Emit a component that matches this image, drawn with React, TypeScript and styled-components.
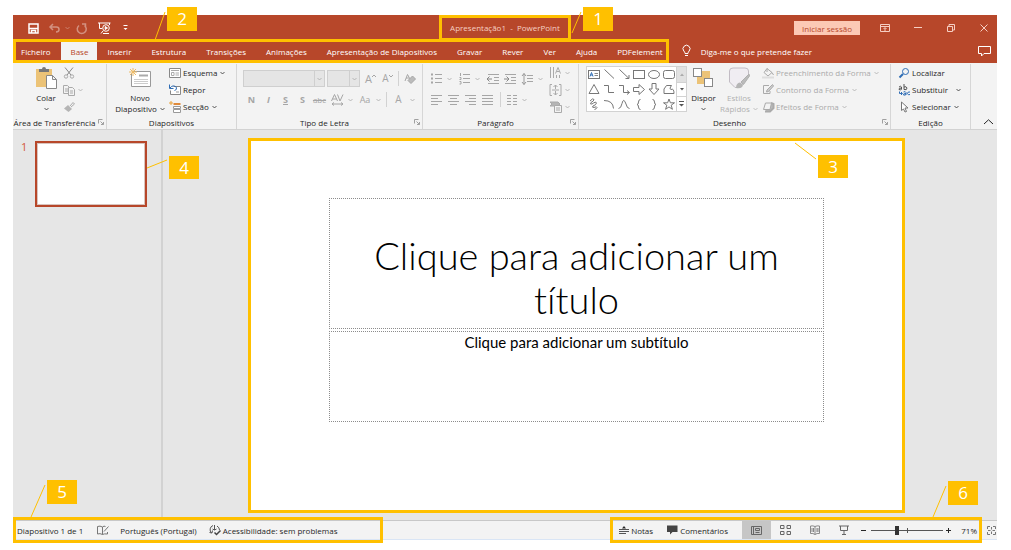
import React from "react";
import styled, { createGlobalStyle, css } from "styled-components";

const GOLD = "#ffc000";
const BRAND = "#b7472a";
const UI_FONT = `"Open Sans", "Noto Sans", sans-serif`;
const SLIDE_FONT = `Lato, "Open Sans", sans-serif`;

const GlobalStyle = createGlobalStyle`
  * { box-sizing: border-box; }
  body { margin: 0; background: #fff; }
  button, select, input { font: inherit; color: inherit; }
`;

/* ---------- shared pieces ---------- */

const Page = styled.div`
  padding: 15px 14px 6px 13px;
  font: 8px/11px ${UI_FONT};
  color: #262626;
`;

const Plain = styled.button`
  display: flex;
  align-items: center;
  justify-content: center;
  padding: 0;
  border: 0;
  background: none;
  cursor: pointer;
  white-space: nowrap;
`;

const Svg = styled.svg`
  display: block;
  flex: none;
  fill: none;
  stroke: currentColor;
  stroke-width: 1;
  overflow: visible;
`;

type IconProps = { w?: number; h?: number; children: React.ReactNode };
const Icon = ({ w = 12, h = 12, children }: IconProps) => (
  <Svg width={w} height={h} viewBox={`0 0 ${w} ${h}`} aria-hidden="true">
    {children}
  </Svg>
);

const Caret = () => (
  <Icon w={5} h={4}>
    <path d="M.5 1 2.5 3 4.5 1" opacity=".75" />
  </Icon>
);

/* ---------- annotations ---------- */

type Place = { $left?: number; $right?: number; $top: number };

const CalloutBox = styled.span<Place & { $h: number }>`
  position: absolute;
  top: ${(p) => p.$top}px;
  ${(p) => (p.$right !== undefined ? `right: ${p.$right}px;` : `left: ${p.$left}px;`)}
  z-index: 3;
  width: 30px;
  height: ${(p) => p.$h}px;
  background: ${GOLD};
  color: #fff;
  font: 17px/${(p) => p.$h}px ${UI_FONT};
  text-align: center;
`;

const Leader = styled(Svg)`
  position: absolute;
  left: 0;
  top: 0;
  stroke: ${GOLD};
`;

type CalloutProps = { n: number; left?: number; right?: number; top: number; h?: number; to: [number, number]; from?: [number, number] };
const Callout = ({ n, left, right, top, h = 24, to, from = [-2, 5] }: CalloutProps) => (
  <CalloutBox $left={left} $right={right} $top={top} $h={h}>
    {n}
    <Leader width={1} height={1} aria-hidden="true">
      <line x1={from[0]} y1={from[1]} x2={to[0]} y2={to[1]} />
    </Leader>
  </CalloutBox>
);

const Framed = styled.div`
  position: relative;
  border: 3px solid ${GOLD};
`;

/* ---------- title bar ---------- */

const TitleBar = styled.header`
  display: grid;
  grid-template-columns: 1fr auto 1fr;
  height: 24px;
  background: ${BRAND};
  color: #fff;
`;

const QuickAccess = styled.div`
  display: flex;
  align-items: center;
  padding-left: 11px;
`;

const QuickButton = styled(Plain)<{ $w: number; $dim?: boolean }>`
  width: ${(p) => p.$w}px;
  height: 20px;
  opacity: ${(p) => (p.$dim ? 0.4 : 1)};
`;

const WindowTitle = styled(Framed)`
  padding: 0 8px;
  line-height: 20px;
  color: #f6cfc3;
  white-space: pre;
`;

const WindowTools = styled.div`
  display: flex;
  align-items: center;
  justify-content: flex-end;
`;

const SignIn = styled(Plain)`
  width: 66px;
  height: 14px;
  margin-right: 8px;
  background: #fcc9b5;
  color: ${BRAND};
`;

const WindowButton = styled(Plain)`
  width: 33px;
  height: 22px;
  color: #f6cfc3;
  &:last-child {
    width: 30px;
    padding-left: 4px;
  }
`;

/* ---------- tabs ---------- */

const TabBar = styled.div`
  display: flex;
  align-items: stretch;
  height: 24px;
  background: ${BRAND};
  color: #fff;
`;

const TabList = styled(Framed).attrs({ as: "nav" })`
  display: flex;
`;

const Tab = styled(Plain)<{ $active?: boolean }>`
  padding: 0 10px;
  &:first-of-type { padding: 0 11px 0 5px; }
  &:last-of-type { padding-right: 3px; }
  ${(p) => p.$active && css`
    padding: 0 9px;
    background: #f3f3f3;
    color: ${BRAND};
  `}
`;

const TellMe = styled(Plain)`
  gap: 10px;
  margin-left: 13px;
`;

const CommentsToggle = styled(Plain)`
  margin: 0 6px 0 auto;
`;

/* ---------- ribbon ---------- */

const Ribbon = styled.section`
  display: grid;
  grid-template-columns: 94fr 130fr 186fr 156fr 312fr 80fr 26fr;
  height: 67px;
  padding: 1px 0;
  background: #f3f3f3;
  border-bottom: 1px solid #d2d2d2;
`;

const Group = styled.div`
  display: flex;
  flex-direction: column;
  min-width: 0;
  border-right: 1px solid #d6d6d6;
`;

const GroupBody = styled.div<{ $pad: number }>`
  display: flex;
  align-items: flex-start;
  height: 51px;
  padding-left: ${(p) => p.$pad}px;
`;

const GroupLabel = styled.div`
  display: flex;
  align-items: center;
  height: 14px;
  white-space: nowrap;
  span { flex: 1; text-align: center; }
`;

const Launcher = styled(Plain)`
  width: 10px;
  color: #a0a0a0;
`;

const LauncherIcon = () => (
  <Launcher aria-label="Mais opções">
    <Icon w={6} h={6}>
      <path d="M.5 4.500V.5H4.500M2.500 2.500 5.500 5.500M5.500 3V5.500H3" />
    </Icon>
  </Launcher>
);

const BigButton = styled(Plain)<{ $w: number; $muted?: boolean }>`
  flex-direction: column;
  justify-content: flex-start;
  width: ${(p) => p.$w}px;
  color: ${(p) => (p.$muted ? "#b0b0b0" : "#262626")};
`;

const BigArt = styled.span`
  display: grid;
  place-items: center;
  height: 28px;
`;

const LabelLine = styled.span`
  display: flex;
  align-items: center;
  gap: 3px;
  height: 11px;
`;

const Stack = styled.div<{ $ml?: number }>`
  display: grid;
  grid-auto-rows: 17px;
  justify-items: start;
  margin-left: ${(p) => p.$ml ?? 0}px;
`;

const StackButton = styled(Plain)<{ $muted?: boolean; $far?: boolean }>`
  gap: 2px;
  color: ${(p) => (p.$muted ? "#aaa" : "#262626")};
  > svg:nth-of-type(2) { margin-left: ${(p) => (p.$far ? 6 : 1)}px; }
`;

const Rows = styled.div`
  display: grid;
  grid-auto-rows: 17px;
  gap: 4px;
  padding-top: 6px;
  color: #a6a6a6;
`;

const Row = styled.div`
  display: flex;
  align-items: center;
`;

const Tool = styled(Plain)<{ $w?: number; $size?: number; $bold?: boolean }>`
  width: ${(p) => p.$w ?? 17}px;
  height: 17px;
  font-size: ${(p) => p.$size ?? 9}px;
  font-weight: ${(p) => (p.$bold ? 700 : 400)};
`;

const Rule = styled.i`
  width: 1px;
  height: 15px;
  margin: 0 2px;
  background: #d2d2d2;
`;

const Gap = styled.i`
  width: 2px;
`;

const Combo = styled.label<{ $w: number }>`
  display: flex;
  align-items: center;
  width: ${(p) => p.$w}px;
  height: 17px;
  margin-right: 2px;
  padding-right: 2px;
  border: 1px solid #cfcfcf;
  background: #e5e5e5;
  select {
    flex: 1;
    min-width: 0;
    height: 15px;
    margin-right: 2px;
    padding: 0;
    border: 0;
    border-right: 1px solid #cfcfcf;
    background: none;
    appearance: none;
  }
`;

const Gallery = styled.div`
  display: grid;
  grid-template-columns: 89px 10px;
  margin-top: 2px;
  height: 46px;
  border: 1px solid #d2d2d2;
  background: #fff;
  width: 101px;
`;

const Shapes = styled.div`
  display: grid;
  grid-template-columns: repeat(6, 1fr);
  grid-template-rows: repeat(3, 1fr);
  color: #777;
`;

const Scroller = styled.div`
  display: grid;
  grid-template-rows: repeat(3, 1fr);
  border-left: 1px solid #d2d2d2;
  color: #555;
  button + button { border-top: 1px solid #d2d2d2; }
  button:first-child { background: #e1e1e1; color: #aaa; }
`;

const Collapse = styled(Plain)`
  align-self: end;
  justify-content: flex-end;
  height: 14px;
  padding-right: 4px;
`;

/* ---------- workspace ---------- */

const Workspace = styled.main`
  display: flex;
  background: #e6e6e6;
`;

const Thumbs = styled.aside`
  display: flex;
  align-items: flex-start;
  flex: none;
  width: 150px;
  padding: 11px 0 0 8px;
  border-right: 2px solid #d2d2d2;
`;

const ThumbNumber = styled.span`
  width: 14px;
  font-size: 11px;
  color: #d2573a;
`;

const Thumb = styled(Plain)`
  position: relative;
  width: 112px;
  height: 66px;
  border: 2px solid ${BRAND};
  background: #fff;
  box-shadow: inset 0 0 0 1px #d9c4be;
  cursor: default;
`;

const Stage = styled.div`
  flex: 1;
  padding: 8px 92px 4px 85px;
`;

const Slide = styled(Framed)`
  height: 375px;
  padding: 57px 78px 0 78px;
  background: #fff;
`;

const Placeholder = styled.div`
  border: 1px dotted #8c8c8c;
  font-family: ${SLIDE_FONT};
  font-variant-ligatures: none;
  text-align: center;
  color: #000;
`;

const TitleHolder = styled(Placeholder)`
  height: 131px;
  padding: 34px 30px 0;
  h1 {
    margin: 0;
    font-size: 38px;
    line-height: 44px;
    font-weight: 300;
  }
`;

const SubtitleHolder = styled(Placeholder)`
  height: 91px;
  margin-top: 2px;
  font-size: 15px;
  line-height: 20px;
`;

/* ---------- status bar ---------- */

const StatusBar = styled.footer`
  display: flex;
  align-items: flex-start;
  justify-content: space-between;
  background: linear-gradient(#e6e6e6 0 3px, #c8c8c8 3px 4px, #f3f3f3 4px 22px, #d9e5f5 22px 23px, #fff 23px);
`;

const StatusLeft = styled(Framed)`
  display: flex;
  align-items: center;
  width: 370px;
  height: 26px;
  padding-left: 1px;
  white-space: nowrap;
`;

const StatusItem = styled(Plain)<{ $ml?: number }>`
  gap: 2px;
  margin-left: ${(p) => p.$ml ?? 0}px;
`;

const StatusRight = styled.div`
  display: flex;
`;

const StatusTools = styled(Framed)`
  display: flex;
  align-items: center;
  height: 26px;
  padding-left: 6px;
`;

const Views = styled.div`
  display: flex;
  margin-left: 14px;
`;

const View = styled(Plain)<{ $active?: boolean }>`
  width: 29px;
  height: 18px;
  color: #666;
  background: ${(p) => (p.$active ? "#c6c6c6" : "none")};
`;

const Zoom = styled.input`
  width: 72px;
  height: 10px;
  margin: 0 3px;
  appearance: none;
  background:
    linear-gradient(#555, #555) 36px center / 1px 5px no-repeat,
    linear-gradient(#555, #555) center / 100% 1px no-repeat;
  &::-webkit-slider-thumb {
    appearance: none;
    width: 4px;
    height: 9px;
    background: #333;
  }
`;

const Percent = styled.output`
  width: 28px;
  padding-right: 2px;
  text-align: right;
`;

const Fit = styled(Plain)`
  width: 15px;
  height: 26px;
  justify-content: flex-end;
  padding-right: 1px;
  color: #777;
`;

/* ---------- data ---------- */

const tabs = ["Ficheiro", "Base", "Inserir", "Estrutura", "Transições", "Animações", "Apresentação de Diapositivos", "Gravar", "Rever", "Ver", "Ajuda", "PDFelement"];

const shapes: [string, React.ReactNode][] = [
  ["Caixa de texto", <><rect x=".5" y="2.500" width="11" height="8" /><path d="M2 8.500 3.500 4.500 5 8.500M2.500 7H4.500" stroke="#2f6db5" /><path d="M6.500 5.500H10M6.500 7.500H10" stroke="#888" /></>],
  ["Linha", <path d="M1.500 1.500 11 10.500" />],
  ["Seta", <path d="M1.500 1.500 11 10.500M11 7V10.500H7.500" />],
  ["Retângulo", <rect x=".5" y="2.500" width="11" height="8" />],
  ["Oval", <ellipse cx="6" cy="6.500" rx="5.500" ry="4" />],
  ["Retângulo arredondado", <rect x=".5" y="2.500" width="11" height="8" rx="2" />],
  ["Triângulo", <path d="M6 1.500 11 10.500H1Z" />],
  ["Conector", <path d="M1 2.500H5.500V9.500H11" />],
  ["Conector com seta", <path d="M1 2.500H5.500V9.500H11.500M9 7.500 11.500 9.500 9 11.500" />],
  ["Seta para a direita", <path d="M.5 4.500H6V1.500L11.500 6.500 6 11.500V8.500H.5Z" />],
  ["Seta para baixo", <path d="M4 .5H8V6H11L6 11.500 1 6H4Z" />],
  ["Forma livre", <path d="M3.500 2.500H8.500Q6 6 8 6.500 11 5 11 10.500H1V6Z" />],
  ["Rabisco", <path d="M2 3Q5-.5 6 1.500 6 3 3 4.500 1.500 6.500 4 6 8 3 8.500 5 8 7 5 8 3.500 9.500 6 9.500 9 8 9 9.500 8.500 11 6.500 11.500" />],
  ["Arco", <path d="M1 2.500Q10 2.500 10.500 10.500" />],
  ["Curva", <path d="M.5 10.500Q3 10.500 4 5.500Q5.500-1 8 6Q9 10.500 11.500 10.500" />],
  ["Chaveta esquerda", <path d="M7.500 1.500Q5.500 1.500 5.500 4 5.500 6.500 4 6.500 5.500 6.500 5.500 9 5.500 11.500 7.500 11.500" />],
  ["Chaveta direita", <path d="M4.500 1.500Q6.500 1.500 6.500 4 6.500 6.500 8 6.500 6.500 6.500 6.500 9 6.500 11.500 4.500 11.500" />],
  ["Estrela", <path d="M6 1 7.400 4.800H11.500L8.200 7.200 9.400 11.300 6 8.900 2.600 11.300 3.800 7.200.5 4.800H4.600Z" />],
];

const lines = (rows: [number, number][]) => rows.map(([a, b], i) => `M${a} ${i * 3 + 1.5}H${b}`).join("");

/* ---------- sections ---------- */

const Title = () => (
  <TitleBar>
    <QuickAccess>
      <QuickButton $w={18} aria-label="Guardar">
        <Icon w={11} h={11}>
          <path d="M1 1H10V10H1Z" strokeWidth="1.500" />
          <path d="M1 5.500H10M3.500 10V7.500H7.500V10" strokeWidth="1.500" />
        </Icon>
      </QuickButton>
      <QuickButton $w={24} $dim aria-label="Anular">
        <Icon w={11} h={10}>
          <path d="M4 1 1 4 4 7M1 4H7.500Q10 4 10 6.500 10 9 7 9" strokeWidth="1.500" />
        </Icon>
      </QuickButton>
      <QuickButton $w={3} $dim aria-label="Opções de anular"><Caret /></QuickButton>
      <QuickButton $w={25} $dim aria-label="Refazer">
        <Icon w={11} h={11}>
          <path d="M3 2.500A4.500 4.500 0 1 0 8.500 2.500M6 1H9.500V4.500" strokeWidth="1.500" />
        </Icon>
      </QuickButton>
      <QuickButton $w={21} aria-label="Apresentar do início">
        <Icon w={13} h={12}>
          <path d="M0 1H12.500M1.500 1V6.500H4M11.500 1V3M3 11.500 5 9" />
          <circle cx="8" cy="6" r="3.300" />
          <path d="M7.200 4.500 9.500 6 7.200 7.500Z" fill="currentColor" />
          <path d="M5 11.500H11" />
        </Icon>
      </QuickButton>
      <QuickButton $w={20} aria-label="Personalizar">
        <Icon w={5} h={6}>
          <path d="M.5.5H4.500" />
          <path d="M.5 3H4.500L2.500 5Z" fill="currentColor" stroke="none" />
        </Icon>
      </QuickButton>
    </QuickAccess>
    <WindowTitle>
      {"Apresentação1  -  PowerPoint"}
      <Callout n={1} left={141} top={-11} to={[-11, 26]} />
    </WindowTitle>
    <WindowTools>
      <SignIn>Iniciar sessão</SignIn>
      <WindowButton aria-label="Opções do friso">
        <Icon w={10} h={8}>
          <path d="M.5.5H9.500V7.500H.5ZM.5 2.500H9.500M5 7V4M3.500 5 5 3.500 6.500 5" />
        </Icon>
      </WindowButton>
      <WindowButton aria-label="Minimizar">
        <Icon w={8} h={8}><path d="M0 3.500H8" /></Icon>
      </WindowButton>
      <WindowButton aria-label="Restaurar">
        <Icon w={8} h={8}><path d="M.5 2.500H5.500V7.500H.5ZM2 2V.5H7.500V6H6" /></Icon>
      </WindowButton>
      <WindowButton aria-label="Fechar">
        <Icon w={8} h={8}><path d="M.5.5 7.500 7.500M7.500.5.5 7.500" /></Icon>
      </WindowButton>
    </WindowTools>
  </TitleBar>
);

const Tabs = () => (
  <TabBar>
    <TabList>
      {tabs.map((t) => (
        <Tab key={t} $active={t === "Base"}>{t}</Tab>
      ))}
      <Callout n={2} left={151} top={-35} to={[-12, 33]} />
    </TabList>
    <TellMe>
      <Icon w={9} h={12}>
        <path d="M3 8.500Q3 7 1.800 6A3.500 3.500 0 1 1 7.200 6Q6 7 6 8.500ZM3 10.500H6" />
      </Icon>
      Diga-me o que pretende fazer
    </TellMe>
    <CommentsToggle aria-label="Comentários">
      <Icon w={13} h={11}>
        <path d="M.5.5H12.500V7.500H6L3.500 10V7.500H.5Z" />
      </Icon>
    </CommentsToggle>
  </TabBar>
);

const Clipboard = () => (
  <Group>
    <GroupBody $pad={16}>
      <BigButton $w={34}>
        <BigArt>
          <Icon w={22} h={24}>
            <rect x="1" y="3" width="16" height="18" fill="#ecc377" stroke="none" />
            <path d="M4 3H7Q7 1 9 1 11 1 11 3H14V6H4Z" fill="#777" stroke="none" />
            <path d="M11.500 9.500H17.500L21.500 13.500V22.500H11.500ZM17.500 9.500V13.500H21.500" fill="#fff" stroke="#888" />
          </Icon>
        </BigArt>
        <LabelLine>Colar</LabelLine>
        <LabelLine><Caret /></LabelLine>
      </BigButton>
      <Stack>
        <StackButton $muted aria-label="Cortar">
          <Icon>
            <path d="M2 .5 8 8M10 .5 4 8" stroke="#888" />
            <circle cx="3" cy="9.500" r="1.700" />
            <circle cx="9" cy="9.500" r="1.700" />
          </Icon>
        </StackButton>
        <StackButton $muted aria-label="Copiar">
          <Icon>
            <path d="M.5 1.500H4.500L6.500 3.500V9.500H.5ZM2 5H5M2 7H5" />
            <path d="M5.500 3.500H9.500L11.500 5.500V11.500H5.500ZM7 7H10M7 9H10" fill="#f3f3f3" />
          </Icon>
          <Caret />
        </StackButton>
        <StackButton $muted aria-label="Pincel de formatação">
          <Icon>
            <path d="M7 5 10 1.500 11.500 3 8 6" />
            <path d="M5 4 9 8 5.500 11 1 7.500Z" fill="#b5b5b5" stroke="none" />
          </Icon>
        </StackButton>
      </Stack>
    </GroupBody>
    <GroupLabel><span>Área de Transferência</span><LauncherIcon /></GroupLabel>
  </Group>
);

const Slides = () => (
  <Group>
    <GroupBody $pad={7}>
      <BigButton $w={52}>
        <BigArt>
          <Icon w={22} h={20}>
            <path d="M3.500 3.500H21.500V18.500H2.500V5" fill="#fff" stroke="#999" />
            <path d="M10 7.500H19" stroke="#aaa" strokeWidth="2" />
            <path d="M5 11.500H19M5 13.500H19M5 15.500H19" stroke="#ccc" />
            <path d="M4 0V8M0 4H8M1 1 7 7M7 1 1 7" stroke="#eebb66" />
          </Icon>
        </BigArt>
        <LabelLine>Novo</LabelLine>
        <LabelLine>Diapositivo <Caret /></LabelLine>
      </BigButton>
      <Stack $ml={3}>
        <StackButton>
          <Icon>
            <path d="M.5 1.500H11.500V10.500H.5Z" fill="#fff" stroke="#888" />
            <path d="M2 3.500H10M2.500 5.500H5V8.500H2.500ZM6.500 6H10M6.500 8H10" stroke="#aaa" />
          </Icon>
          Esquema <Caret />
        </StackButton>
        <StackButton>
          <Icon>
            <path d="M4.500 2.500H11.500V10.500H1.500V6.500" fill="#fff" stroke="#888" />
            <path d="M.5.5V4.500H4.500M1 4Q4 0 7.500 3.500 8 6 5.500 6.500" stroke="#2f6db5" />
            <path d="M7 8H10" stroke="#999" />
          </Icon>
          Repor
        </StackButton>
        <StackButton>
          <Icon>
            <path d="M4.500 3H11.500" stroke="#e08a3a" strokeWidth="2" />
            <path d="M4.500 5.500H11.500V7.500H4.500ZM4.500 8.500H11.500V11.500H4.500Z" fill="#fff" stroke="#999" />
            <path d="M2 0V4M0 2H4" stroke="#e8a33d" />
          </Icon>
          Secção <Caret />
        </StackButton>
      </Stack>
    </GroupBody>
    <GroupLabel><span>Diapositivos</span></GroupLabel>
  </Group>
);

const FontGroup = () => (
  <Group>
    <GroupBody $pad={6}>
      <Rows>
        <Row>
          <Combo $w={82}><select aria-label="Tipo de letra" /><Caret /></Combo>
          <Combo $w={33}><select aria-label="Tamanho" /><Caret /></Combo>
          <Tool $size={11} aria-label="Aumentar">A<Icon w={4} h={10}><path d="M0 3 2 1 4 3" /></Icon></Tool>
          <Tool $size={10} aria-label="Diminuir">A<Icon w={4} h={10}><path d="M0 1 2 3 4 1" /></Icon></Tool>
          <Rule />
          <Tool aria-label="Limpar formatação">
            <Icon>
              <path d="M1 8 3.500 1.500 6 6M2 5H5" />
              <path d="M8.500 3 11.500 6 7 10.500 4 7.500Z" fill="#bbb" />
            </Icon>
          </Tool>
        </Row>
        <Row>
          <Tool $bold>N</Tool>
          <Tool $bold><em>I</em></Tool>
          <Tool $bold><u>S</u></Tool>
          <Tool $bold>S</Tool>
          <Tool $size={8}><s>abc</s></Tool>
          <Tool $w={18} aria-label="Espaçamento">
            <Icon w={13} h={12}>
              <path d="M.5 7 3.500.5 6.500 7M1.500 5H5.500M6.500.5 9 7 12 .5M1 10H12M3 8.500 1 10 3 11.500M10 8.500 12 10 10 11.500" />
            </Icon>
          </Tool>
          <Tool $w={8} aria-label="Opções de espaçamento"><Caret /></Tool>
          <Gap />
          <Tool $w={18} $size={9}>Aa</Tool>
          <Tool $w={8} aria-label="Opções de maiúsculas"><Caret /></Tool>
          <Gap />
          <Rule />
          <Tool $w={19} $size={10}>A</Tool>
          <Tool $w={8} aria-label="Opções de cor"><Caret /></Tool>
        </Row>
      </Rows>
    </GroupBody>
    <GroupLabel><span>Tipo de Letra</span><LauncherIcon /></GroupLabel>
  </Group>
);

const Paragraph = () => (
  <Group>
    <GroupBody $pad={5}>
      <Rows>
        <Row>
          <Tool aria-label="Marcas">
            <Icon w={11} h={11}>
              <path d="M4 1.500H11M4 5.500H11M4 9.500H11" />
              <path d="M0 1.500H2M0 5.500H2M0 9.500H2" strokeWidth="2" />
            </Icon>
          </Tool>
          <Tool $w={9} aria-label="Opções de marcas"><Caret /></Tool>
          <Gap />
          <Tool aria-label="Numeração">
            <Icon w={11} h={11}>
              <path d="M4 1.500H11M4 5.500H11M4 9.500H11M1.500 0V3M.5 4.500H2V6.500H.5M.5 8.500H2V11H.5" />
            </Icon>
          </Tool>
          <Tool $w={9} aria-label="Opções de numeração"><Caret /></Tool>
          <Gap />
          <Tool aria-label="Diminuir avanço">
            <Icon w={12} h={10}>
              <path d="M1 .5H12M7 3.500H12M7 6.500H12M1 9.500H12" />
              <path d="M0 5H5M2.500 2.500 0 5 2.500 7.500" stroke="#888" />
            </Icon>
          </Tool>
          <Tool aria-label="Aumentar avanço">
            <Icon w={12} h={10}>
              <path d="M1 .5H12M7 3.500H12M7 6.500H12M1 9.500H12" />
              <path d="M0 5H5M2.500 2.500 5 5 2.500 7.500" stroke="#888" />
            </Icon>
          </Tool>
          <Tool $w={18} aria-label="Espaçamento entre linhas">
            <Icon w={11} h={12}>
              <path d="M5 2.500H11M5 5.500H11M5 8.500H11" />
              <path d="M2 .5V11.500M0 3 2 .5 4 3M0 9 2 11.500 4 9" stroke="#999" />
            </Icon>
          </Tool>
          <Tool $w={9} aria-label="Opções de espaçamento entre linhas"><Caret /></Tool>
        </Row>
        <Row>
          <Tool aria-label="Alinhar à esquerda"><Icon w={11} h={11}><path d={lines([[0, 11], [0, 7], [0, 11], [0, 7]])} /></Icon></Tool>
          <Tool aria-label="Centrar"><Icon w={11} h={11}><path d={lines([[0, 11], [2, 9], [0, 11], [2, 9]])} /></Icon></Tool>
          <Tool aria-label="Alinhar à direita"><Icon w={11} h={11}><path d={lines([[0, 11], [4, 11], [0, 11], [4, 11]])} /></Icon></Tool>
          <Tool aria-label="Justificar"><Icon w={11} h={11}><path d={lines([[0, 11], [0, 11], [0, 11], [0, 11]])} /></Icon></Tool>
          <Gap />
          <Rule />
          <Tool aria-label="Colunas"><Icon w={10} h={11}><path d="M0 1.500H4M0 4.500H4M0 7.500H4M0 10.500H4M6 1.500H10M6 4.500H10M6 7.500H10M6 10.500H10" /></Icon></Tool>
          <Tool $w={9} aria-label="Opções de colunas"><Caret /></Tool>
        </Row>
      </Rows>
      <Stack $ml={4}>
        <StackButton $muted aria-label="Orientação do texto">
          <Icon w={13} h={12}><path d="M1.500 0V11M4.500 0V11M7.500 8V11M10.500 8V11M6.500 6.500 9 .5 11.500 6.500M7.500 4.500H10.500" /></Icon>
          <Caret />
        </StackButton>
        <StackButton $muted aria-label="Alinhar texto">
          <Icon w={13} h={12}><path d="M3 .5H1V11.500H3M10 .5H12V11.500H10M6.500 1V5M6.500 7V11M4.500 3 6.500 1 8.500 3M4.500 9 6.500 11 8.500 9M3 6H10" /></Icon>
          <Caret />
        </StackButton>
        <StackButton $muted aria-label="Converter em SmartArt">
          <Icon w={13} h={12}>
            <path d="M1 1H9L11 3 9 5H1L3 3Z" fill="#b5b5b5" />
            <path d="M5.500 4.500H12.500V11.500H5.500ZM7 7H11M7 9H11" fill="#f3f3f3" />
          </Icon>
          <Caret />
        </StackButton>
      </Stack>
    </GroupBody>
    <GroupLabel><span>Parágrafo</span><LauncherIcon /></GroupLabel>
  </Group>
);

const Drawing = () => (
  <Group>
    <GroupBody $pad={7}>
      <Gallery>
        <Shapes>
          {shapes.map(([name, art]) => (
            <Plain key={name} aria-label={name}><Icon>{art}</Icon></Plain>
          ))}
        </Shapes>
        <Scroller>
          <Plain aria-label="Anterior"><Icon w={4} h={3}><path d="M0 3H4L2 .5Z" fill="currentColor" stroke="none" /></Icon></Plain>
          <Plain aria-label="Seguinte"><Icon w={4} h={3}><path d="M0 0H4L2 2.500Z" fill="currentColor" stroke="none" /></Icon></Plain>
          <Plain aria-label="Todas as formas"><Icon w={5} h={6}><path d="M0 .5H5" /><path d="M0 3H5L2.500 5.500Z" fill="currentColor" stroke="none" /></Icon></Plain>
        </Scroller>
      </Gallery>
      <BigButton $w={33}>
        <BigArt>
          <Icon w={21} h={22}>
            <rect x="4" y="4" width="13" height="13" fill="#ecc377" stroke="none" />
            <rect x=".5" y="1.500" width="8" height="8" fill="#fff" stroke="#888" />
            <rect x="11.500" y="11.500" width="8" height="8" fill="#fff" stroke="#888" />
          </Icon>
        </BigArt>
        <LabelLine>Dispor</LabelLine>
        <LabelLine><Caret /></LabelLine>
      </BigButton>
      <BigButton $w={38} $muted>
        <BigArt>
          <Icon w={22} h={22}>
            <path d="M12 20.500H7L1.500 15V4Q1.500 1 5 1H17Q20.500 1 20.500 4V8" fill="#f0edf2" stroke="#c2bcc4" />
            <path d="M21 7 13 15 15.500 17.500 21.500 9Z" fill="#bbb" />
            <path d="M12 15.500Q8 16 8 21 15 22 15 17.500Z" fill="#b5b5b5" stroke="none" />
          </Icon>
        </BigArt>
        <LabelLine>Estilos</LabelLine>
        <LabelLine>Rápidos <Caret /></LabelLine>
      </BigButton>
      <Stack $ml={4}>
        <StackButton $muted>
          <Icon>
            <path d="M5 1.500 10 5.500 6 9 2 5.500ZM5 1.500V5M10 5.500 11.500 8" />
            <path d="M0 10.500H12" stroke="#ddd" strokeWidth="2" />
          </Icon>
          Preenchimento da Forma <Caret />
        </StackButton>
        <StackButton $muted>
          <Icon>
            <path d="M7 1.500H1.500V9.500H8V7" />
            <path d="M4.500 8 5 6 10.500.5 11.500 2 6.500 7.500Z" fill="#ccc" />
          </Icon>
          Contorno da Forma <Caret />
        </StackButton>
        <StackButton $muted>
          <Icon>
            <path d="M3 10.500H8L11.500 7V3L9 2" fill="#bbb" strokeWidth="2" />
            <path d="M3.500 2H9.500L8 8.500H1.500Z" fill="#f3f3f3" />
          </Icon>
          Efeitos de Forma <Caret />
        </StackButton>
      </Stack>
    </GroupBody>
    <GroupLabel><span>Desenho</span><LauncherIcon /></GroupLabel>
  </Group>
);

const Editing = () => (
  <Group>
    <GroupBody $pad={7}>
      <Stack>
        <StackButton>
          <Icon>
            <circle cx="7.500" cy="4.500" r="3" stroke="#2f6db5" />
            <path d="M5 7 1.500 10.500" stroke="#2f6db5" strokeWidth="2" />
          </Icon>
          Localizar
        </StackButton>
        <StackButton $far>
          <Icon>
            <path d="M1 3Q3 1.500 3.500 3V5.500M3.500 4Q.5 4 1 5.500 2.500 6.500 3.500 5M6 0V5.500Q9 6.500 9 4 8.500 2 6 3" stroke="#555" />
            <path d="M1.500 7.500V9.500H4M3 8 4.500 9.500 3 11M5.500 8Q7.500 7 8 8.500V11M8 9.500Q5 9.500 5.500 11 7 11.500 8 10.500M12 8Q9.500 7.500 9.500 9.500 10 11.500 12 10.500" stroke="#2f6db5" />
          </Icon>
          Substituir <Caret />
        </StackButton>
        <StackButton>
          <Icon>
            <path d="M3.500 1 10 7H7L8.500 10.500 7 11 5.500 8 3.500 9.500Z" fill="#fff" stroke="#777" />
          </Icon>
          Selecionar <Caret />
        </StackButton>
      </Stack>
    </GroupBody>
    <GroupLabel><span>Edição</span></GroupLabel>
  </Group>
);

const Status = () => (
  <StatusBar>
    <StatusLeft>
      <StatusItem>Diapositivo 1 de 1</StatusItem>
      <StatusItem $ml={14} aria-label="Verificação ortográfica">
        <Icon w={12} h={11}>
          <path d="M5.500 2V9.500M5.500 2Q3 .5.500 1.500V9Q3 8 5.500 9.500 7 8.500 10.500 9V7M5.500 2Q7 .5 8.500 1.500M7 6.500 11.500 1.500" stroke="#777" />
        </Icon>
      </StatusItem>
      <StatusItem $ml={11}>Português (Portugal)</StatusItem>
      <StatusItem $ml={12}>
        <Icon w={12} h={12}>
          <path d="M4 1.500A4.500 4.500 0 0 0 2.500 9M.5 8.500 3 9 3.500 6.500M5.500 1V6L3.500 5M5.500 6 7.500 5M8 2Q10.500 3.500 10.500 6" stroke="#555" />
          <path d="M5.500 8.500 7.500 10.500 11.500 6.500" stroke="#444" strokeWidth="1.500" />
        </Icon>
        Acessibilidade: sem problemas
      </StatusItem>
      <Callout n={5} left={31} top={-40} to={[-16, 37]} />
    </StatusLeft>
    <StatusRight>
      <StatusTools>
        <StatusItem>
          <Icon w={10} h={10}>
            <path d="M0 4.500H10M0 6.500H10M0 8.500H7" stroke="#555" />
            <path d="M3 3.500 5 1 7 3.500Z" fill="currentColor" stroke="none" />
          </Icon>
          Notas
        </StatusItem>
        <StatusItem $ml={14}>
          <Icon w={11} h={10}>
            <path d="M0 .5H10.500V7H5.500L3 9.500V7H0Z" fill="#444" stroke="none" />
          </Icon>
          Comentários
        </StatusItem>
        <Views>
          <View $active aria-label="Normal">
            <Icon w={11} h={9}>
              <path d="M.5.5H10.500V8.500H.5ZM2.500.5V8.500M4.500 2.500H8.500V4.500H4.500ZM4.500 6.500H8.500" />
            </Icon>
          </View>
          <View aria-label="Organizador">
            <Icon w={11} h={10}>
              <path d="M.5.5H4V3.500H.5ZM7 .5H10.500V3.500H7ZM.5 6.500H4V9.500H.5ZM7 6.500H10.500V9.500H7Z" />
            </Icon>
          </View>
          <View aria-label="Leitura">
            <Icon w={10} h={10}>
              <path d="M5 1.500V9.500M5 1.500Q3 .5.500 1V8.500Q3 8 5 9.500 7 8 9.500 8.500V1Q7 .5 5 1.500M2 3V7M3.500 3V7M7 3V7M8 3V7" stroke="#888" />
            </Icon>
          </View>
          <View aria-label="Apresentação">
            <Icon w={10} h={10}>
              <path d="M0 1H10M1.500 1V5.500H8.500V1M5 5.500V9M3 9.500H7" />
            </Icon>
          </View>
        </Views>
        <Plain aria-label="Reduzir"><Icon w={10} h={7}><path d="M3 3.500H8" /></Icon></Plain>
        <Zoom type="range" aria-label="Zoom" min={0} max={100} defaultValue={35} />
        <Plain aria-label="Ampliar"><Icon w={5} h={5}><path d="M0 2.500H5M2.500 0V5" /></Icon></Plain>
        <Percent>71%</Percent>
        <Callout n={6} right={1} top={-39} to={[-15, 36]} />
      </StatusTools>
      <Fit aria-label="Ajustar à janela">
        <Icon w={9} h={9}>
          <path d="M3 .5H.5V3M6 .5H8.500V3M.5 6V8.500H3M8.500 6V8.500H6M4.500 1V3.500M4.500 5.500V8M1 4.500H3.500M5.500 4.500H8" />
        </Icon>
      </Fit>
    </StatusRight>
  </StatusBar>
);

export default function App() {
  return (
    <Page>
      <GlobalStyle />
      <Title />
      <Tabs />
      <Ribbon>
        <Clipboard />
        <Slides />
        <FontGroup />
        <Paragraph />
        <Drawing />
        <Editing />
        <Collapse aria-label="Fechar o friso">
          <Icon w={9} h={6}><path d="M0 5 4.500 .8 9 5" /></Icon>
        </Collapse>
      </Ribbon>
      <Workspace>
        <Thumbs>
          <ThumbNumber>1</ThumbNumber>
          <Thumb as="div">
            <Callout n={4} left={132} top={13} h={23} from={[-2, 4]} to={[-22, 12]} />
          </Thumb>
        </Thumbs>
        <Stage>
          <Slide>
            <TitleHolder><h1>Clique para adicionar um título</h1></TitleHolder>
            <SubtitleHolder>Clique para adicionar um subtítulo</SubtitleHolder>
            <Callout n={3} right={54} top={14} h={23} from={[-2, 4]} to={[-23, -12]} />
          </Slide>
        </Stage>
      </Workspace>
      <Status />
    </Page>
  );
}
